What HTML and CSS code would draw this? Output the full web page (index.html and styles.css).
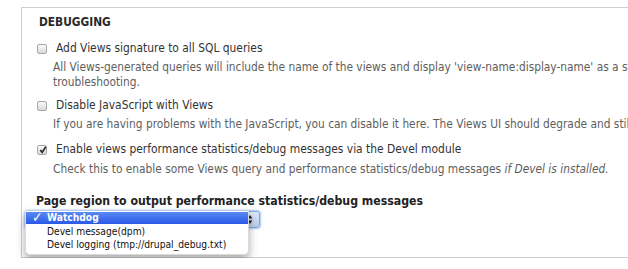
FILE: index.html
```html
<!DOCTYPE html>
<html>
<head>
<meta charset="utf-8">
<link rel="stylesheet" href="styles.css">
</head>
<body>
<div class="fieldset">
  <h2 class="legend">DEBUGGING</h2>
  <div class="item first">
    <label class="option"><span class="cb"></span>Add Views signature to all SQL queries</label>
    <div class="desc">All Views-generated queries will include the name of the views and display 'view-name:display-name' as a string at the end of the SELECT clause. This makes identifying Views queries in database server logs simpler, but should only be used when<br>troubleshooting.</div>
  </div>
  <div class="item">
    <label class="option"><span class="cb"></span>Disable JavaScript with Views</label>
    <div class="desc">If you are having problems with the JavaScript, you can disable it here. The Views UI should degrade and still be usable without javascript; it's just not as good.</div>
  </div>
  <div class="item third">
    <label class="option"><span class="cb checked"><svg viewBox="0 0 10 10" width="10" height="10"><path d="M2.3 5 L4.2 7.4 L7.8 1.8" fill="none" stroke="#2a2a2a" stroke-width="1.7"/></svg></span>Enable views performance statistics/debug messages via the Devel module</label>
    <div class="desc">Check this to enable some Views query and performance statistics/debug messages <em>if Devel is installed.</em></div>
  </div>
  <div class="select-item">
    <div class="select-label">Page region to output performance statistics/debug messages</div>
    <div class="select-wrap">
      <div class="select"><span class="arrows"><svg viewBox="0 0 6 12" width="6" height="11"><path d="M3 1 L5.6 5 H0.4 Z M3 11 L5.6 7 H0.4 Z" fill="#222"/></svg></span></div>
      <ul class="menu">
        <li class="sel"><span class="tick">✓</span>Watchdog</li>
        <li>Devel message(dpm)</li>
        <li>Devel logging (tmp://drupal_debug.txt)</li>
      </ul>
    </div>
  </div>
</div>
</body>
</html>
```
FILE: styles.css
```css
html, body {
  margin: 0;
  padding: 0;
  background: #fff;
  overflow: hidden;
}
body {
  font-family: "DejaVu Sans Condensed", "DejaVu Sans", sans-serif;
  font-stretch: condensed;
  color: #333;
}
.fieldset {
  margin: 7px 0 0 21px;
  width: 700px;
  height: 251px;
  border: 1px solid #cfcfcf;
  border-right: none;
  box-sizing: border-box;
  padding: 7px 0 0 15px;
}
.legend {
  margin: 0 0 0 2px;
  font-size: 11.8px;
  font-weight: bold;
  line-height: 15px;
  color: #2b2b2b;
}
.item {
  margin-top: 8px;
}
.item.first {
  margin-top: 11px;
}
.item.third {
  margin-top: 10px;
}
.option {
  display: flex;
  align-items: center;
  font-size: 11.9px;
  line-height: 15px;
  color: #333;
  white-space: nowrap;
}
.cb {
  width: 8px;
  height: 8px;
  border: 1px solid #a8a8a8;
  border-radius: 2px;
  background: linear-gradient(#fafafa, #d9d9d9);
  margin-right: 9px;
  display: flex;
  align-items: center;
  justify-content: center;
  flex: none;
  overflow: visible;
}
.cb svg {
  flex: none;
  margin-left: 1px;
}
.desc {
  font-size: 11.8px;
  line-height: 15px;
  color: #5e5e5e;
  margin-top: 4px;
  padding-left: 16px;
  white-space: nowrap;
}
.third .desc {
  margin-top: 5px;
}
.desc em {
  font-style: oblique;
}
.select-item {
  margin-top: 16px;
  margin-left: -1px;
}
.select-label {
  font-size: 12.2px;
  font-weight: bold;
  line-height: 16px;
  color: #222;
  white-space: nowrap;
}
.select-wrap {
  position: relative;
  margin-top: 2px;
  margin-left: -12px;
  height: 44px;
}
.select {
  width: 233px;
  height: 15px;
  margin-left: 1px;
  margin-top: 1px;
  border: 1px solid #7ea6dc;
  border-radius: 3px;
  box-shadow: 0 0 2px 1px #a9c8ef;
  background: linear-gradient(#dfe9f7, #b7cbe8);
  display: flex;
  justify-content: flex-end;
  align-items: center;
}
.arrows {
  display: flex;
  padding-right: 6px;
}
.menu {
  position: absolute;
  top: 0;
  left: 1px;
  width: 222px;
  margin: 0;
  padding: 1px 0 3px;
  list-style: none;
  background: #fff;
  border: 1px solid #dadada;
  border-top: none;
  border-radius: 0 0 5px 5px;
  box-shadow: 0 4px 9px rgba(0,0,0,0.35);
  font-size: 10.2px;
  line-height: 13px;
  color: #111;
}
.menu li {
  padding-left: 21px;
  position: relative;
  white-space: nowrap;
}
.menu li.sel {
  background: linear-gradient(#5a8af2, #2a5ae6);
  color: #fff;
  font-weight: bold;
  line-height: 12px;
  margin-bottom: 1px;
}
.tick {
  position: absolute;
  left: 6px;
  top: -1px;
  font-family: "DejaVu Sans", sans-serif;
  font-size: 14px;
  line-height: 13px;
  font-weight: bold;
}
```
